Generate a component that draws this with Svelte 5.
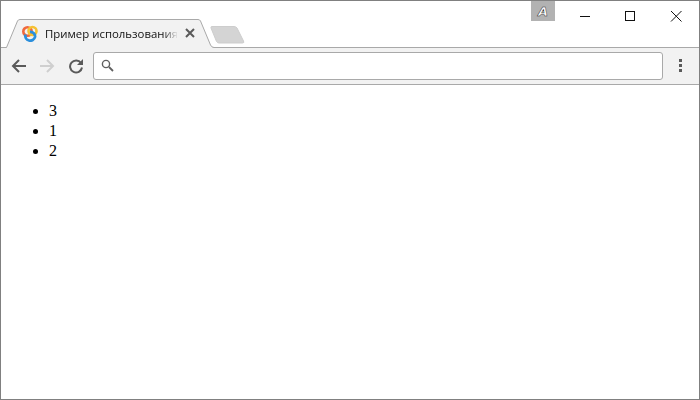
<script>
  const items = ["3", "1", "2"];
</script>

<div class="window">
  <header class="titlebar">
    <div class="tabs">
      <div class="tab">
        <svg class="tab-shape" width="215" height="30" viewBox="0 0 215 30">
          <path d="M0 30 V28.5 H5.5 L16.5 2 Q17.2 0.5 19 0.5 H197 Q198.8 0.5 199.5 2 L209.5 26 Q210.7 28.5 213 28.5 H215 V30 Z" fill="#f2f2f2" />
          <path d="M0 28.5 H5.5 L16.5 2 Q17.2 0.5 19 0.5 H197 Q198.8 0.5 199.5 2 L209.5 26 Q210.7 28.5 213 28.5 H215" fill="none" stroke="#a9a9a9" />
        </svg>
        <svg class="favicon" width="16" height="17" viewBox="0 0 16 17">
          <circle cx="5.5" cy="6.5" r="4.2" fill="none" stroke="#f0683c" stroke-width="2.6" />
          <circle cx="10.5" cy="6" r="4" fill="none" stroke="#f6c132" stroke-width="2.6" />
          <path d="M3.5 9.5 A4.8 4.8 0 0 0 13 12 A4.4 4.4 0 0 0 8 7" fill="none" stroke="#2b8fdc" stroke-width="2.8" />
        </svg>
        <span class="tab-title">Пример использования</span>
        <svg class="tab-close" width="10" height="10" viewBox="0 0 10 10">
          <path d="M1 1 L9 9 M9 1 L1 9" stroke="#5a5a5a" stroke-width="2" />
        </svg>
      </div>
      <svg class="new-tab" width="36" height="19" viewBox="0 0 36 19">
        <path d="M1 2 Q0.5 0.5 2 0.5 H24 Q26 0.5 27 2 L33.5 15 Q34.5 17 32.5 17 H9 Q7.5 17 6.5 15.5 Z" fill="#d4d4d4" stroke="#cdcdcd" />
      </svg>
    </div>
    <div class="avatar">A</div>
    <div class="controls">
      <svg width="46" height="30" viewBox="0 0 46 30"><path d="M19 15.5 H29" stroke="#111" /></svg>
      <svg width="46" height="30" viewBox="0 0 46 30"><rect x="18.5" y="10.5" width="9" height="9" fill="none" stroke="#111" /></svg>
      <svg width="46" height="30" viewBox="0 0 46 30"><path d="M18 10 L28.5 20.5 M28.5 10 L18 20.5" stroke="#111" /></svg>
    </div>
  </header>

  <nav class="toolbar">
    <button class="nav" aria-label="Back">
      <svg width="16" height="16" viewBox="0 0 16 16"><path d="M15 8 H2 M8 2 L2 8 L8 14" fill="none" stroke="#5a5a5a" stroke-width="2" /></svg>
    </button>
    <button class="nav" aria-label="Forward">
      <svg width="16" height="16" viewBox="0 0 16 16"><path d="M1 8 H14 M8 2 L14 8 L8 14" fill="none" stroke="#cfcfcf" stroke-width="2" /></svg>
    </button>
    <button class="nav" aria-label="Reload">
      <svg width="16" height="16" viewBox="0 0 16 16">
        <path d="M13 5 A6 6 0 1 0 14 9.5" fill="none" stroke="#5a5a5a" stroke-width="2" />
        <path d="M15 1 V7 H9 Z" fill="#5a5a5a" />
      </svg>
    </button>
    <div class="omnibox">
      <svg width="13" height="13" viewBox="0 0 13 13">
        <circle cx="5" cy="5" r="3.6" fill="none" stroke="#5f5f5f" stroke-width="1.4" />
        <path d="M8 8 L12 12" stroke="#5f5f5f" stroke-width="1.8" />
      </svg>
    </div>
    <div class="menu"><i></i><i></i><i></i></div>
  </nav>

  <main class="page">
    <ul>
      {#each items as item}
        <li>{item}</li>
      {/each}
    </ul>
  </main>
</div>

<style>
  :global(body) {
    margin: 0;
    background: #fff;
  }
  .window {
    box-sizing: border-box;
    width: 700px;
    height: 400px;
    border: 1px solid #808080;
    display: flex;
    flex-direction: column;
    overflow: hidden;
  }
  .titlebar {
    height: 47px;
    box-sizing: border-box;
    flex: none;
    display: flex;
    justify-content: space-between;
    position: relative;
    background: #fff;
    border-bottom: 1px solid #a9a9a9;
  }
  .tabs {
    display: flex;
    align-items: flex-start;
    padding: 18px 0 0;
    position: relative;
    z-index: 1;
  }
  .tab {
    width: 215px;
    height: 30px;
    position: relative;
    display: flex;
    align-items: center;
    box-sizing: border-box;
    padding: 0 0 2px 21px;
  }
  .tab-shape {
    position: absolute;
    left: 0;
    top: 0;
  }
  .favicon {
    position: relative;
    flex: none;
  }
  .tab-title {
    position: relative;
    flex: none;
    width: 132px;
    margin-left: 7px;
    font: 11.4px "Open Sans", "Noto Sans", sans-serif;
    color: #111;
    white-space: nowrap;
    -webkit-mask-image: linear-gradient(to right, #000 118px, transparent 133px);
    mask-image: linear-gradient(to right, #000 118px, transparent 133px);
  }
  .tab-close {
    position: relative;
    margin-left: 8px;
    flex: none;
  }
  .new-tab {
    margin: 7px 0 0 -6px;
  }
  .avatar {
    position: absolute;
    left: 530px;
    top: 0;
    width: 24px;
    height: 20px;
    background: #b2b2b2;
    color: #fff;
    font: italic bold 13px/22px "DejaVu Sans", sans-serif;
    text-align: center;
    -webkit-text-stroke: 0.5px #333;
  }
  .controls {
    display: flex;
    align-items: flex-start;
  }
  .controls svg {
    display: block;
  }
  .toolbar {
    height: 37px;
    flex: none;
    box-sizing: border-box;
    display: flex;
    align-items: center;
    background: #f2f2f2;
    border-bottom: 1px solid #a9a9a9;
    padding: 0 0 1px 10px;
  }
  .nav {
    width: 28px;
    height: 24px;
    padding: 0;
    border: 0;
    background: none;
    display: flex;
    align-items: center;
    justify-content: flex-start;
  }
  .nav:nth-child(2) {
    width: 29px;
  }
  .nav:nth-child(3) {
    width: 25px;
  }
  .omnibox {
    box-sizing: border-box;
    width: 570px;
    height: 28px;
    background: #fff;
    border: 1px solid #a9a9a9;
    border-radius: 3px;
    display: flex;
    align-items: center;
    padding-left: 7px;
  }
  .menu {
    display: flex;
    flex-direction: column;
    gap: 2px;
    margin-left: 16px;
  }
  .menu i {
    display: block;
    width: 3px;
    height: 3px;
    background: #5a5a5a;
  }
  .page {
    flex: 1;
    background: #fff;
    padding: 0 8px;
  }
  ul {
    margin: 16px 0 0;
    padding-left: 40px;
    font: 16px/20px "Liberation Serif", serif;
    color: #000;
  }
</style>
